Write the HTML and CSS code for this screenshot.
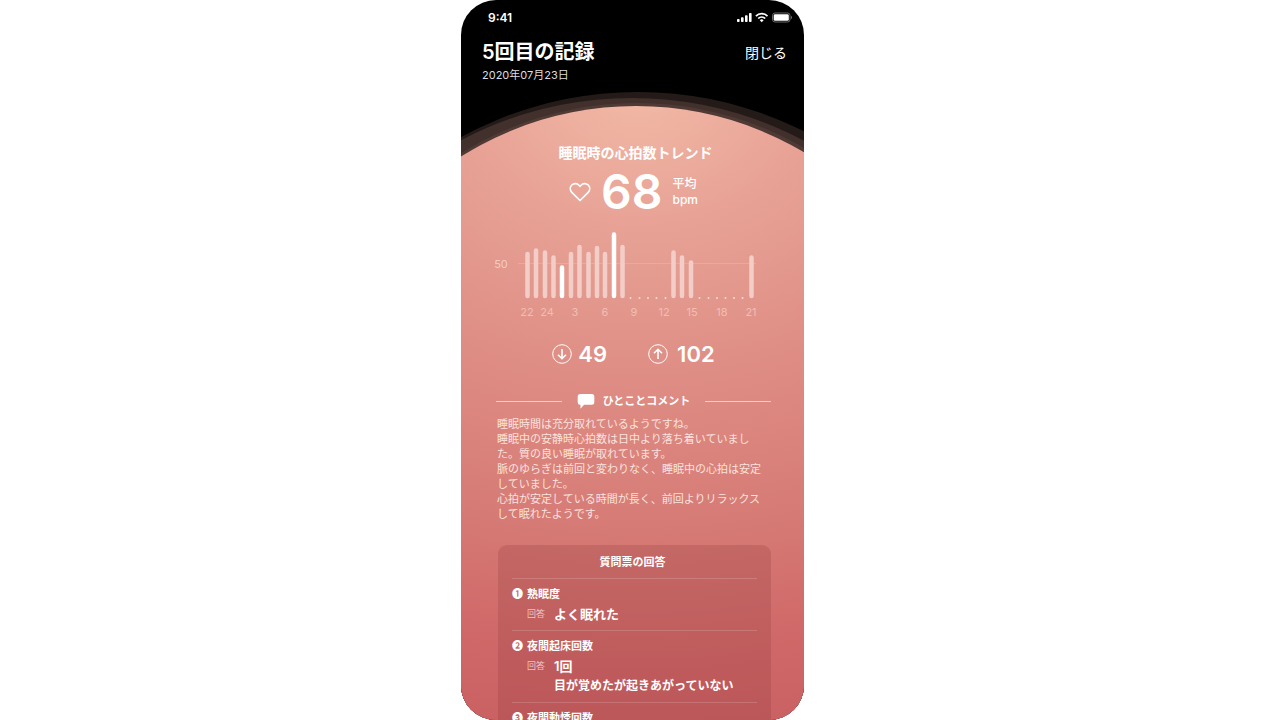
FILE: index.html
```html
<!DOCTYPE html>
<html lang="ja">
<head>
<meta charset="utf-8">
<meta name="viewport" content="width=device-width, initial-scale=1">
<title>5回目の記録</title>
<link rel="stylesheet" href="styles.css">
</head>
<body>
<main class="phone">
  <svg class="backdrop" viewBox="0 0 343 720" preserveAspectRatio="xMidYMin slice" aria-hidden="true">
    <defs>
      <radialGradient id="glow" gradientUnits="userSpaceOnUse" cx="0" cy="0" r="650" gradientTransform="translate(177 90) scale(1.3 1)">
        <stop offset="0" stop-color="#f2b9a6"/>
        <stop offset="0.2" stop-color="#e8a396"/>
        <stop offset="0.42" stop-color="#df8f86"/>
        <stop offset="0.68" stop-color="#d67a75"/>
        <stop offset="0.88" stop-color="#cf6667"/>
        <stop offset="1" stop-color="#c96062"/>
      </radialGradient>
    </defs>
    <rect width="343" height="720" fill="#000"/>
    <circle cx="177" cy="462" r="370" fill="#241b19"/>
    <circle cx="171" cy="466" r="368" fill="#42302c"/>
    <circle cx="176" cy="436" r="333" fill="#503a35"/>
    <circle cx="175" cy="434" r="328" fill="url(#glow)"/>
    <rect y="300" width="343" height="420" fill="url(#glow)"/>
  </svg>

  <header class="top">
    <div class="status">
      <span class="clock">9:41</span>
      <svg class="signals" width="55" height="12" viewBox="0 0 55 12" fill="#fff" aria-hidden="true">
        <rect x="0" y="8" width="2.600" height="3" rx=".8"/>
        <rect x="4" y="6.300" width="2.600" height="4.700" rx=".8"/>
        <rect x="8" y="4.200" width="2.600" height="6.800" rx=".8"/>
        <rect x="12" y="2" width="2.600" height="9" rx=".8"/>
        <g fill="none" stroke="#fff" stroke-width="1.700">
          <path d="M18.900 5.100a8.200 8.200 0 0 1 11.600 0"/>
          <path d="M21.200 7.500a5 5 0 0 1 7 0"/>
        </g>
        <path d="M24.700 11.200l-1.900-1.900a2.700 2.700 0 0 1 3.800 0z"/>
        <rect x="35.500" y="2" width="17.500" height="9" rx="2.500" fill="none" stroke="#777" stroke-width=".9"/>
        <rect x="36.700" y="3.200" width="15.100" height="6.600" rx="1.400"/>
        <path d="M54 5v3q1-.4 1-1.500t-1-1.500z" fill="#777"/>
      </svg>
    </div>
    <div class="heading">
      <h1 class="title">5回目の記録</h1>
      <button class="close" type="button">閉じる</button>
    </div>
    <p class="date">2020年07月23日</p>
  </header>

  <section class="trend">
    <h2 class="trend-title">睡眠時の心拍数トレンド</h2>
    <div class="average">
      <svg class="heart" width="22" height="20" viewBox="0 0 22 20" fill="none" stroke="#fff" stroke-width="1.700" stroke-linejoin="round" aria-hidden="true">
        <path d="M11 18.500 2.800 10.300C.8 8.200.8 5 2.800 3 4.900 1 8.200 1.100 10 3.200L11 4.300 12 3.200C13.800 1.100 17.100 1 19.200 3c2 2 2 5.200 0 7.300z"/>
      </svg>
      <strong class="average-value">68</strong>
      <span class="average-unit">平均<br>bpm</span>
    </div>
    <svg class="chart" viewBox="0 0 275 96" role="img" aria-label="心拍数">
      <path class="grid-line" d="M22 38.500H260"/>
      <path class="bars" d="M31.500 29V71M40 25.500V71M49 27.500V71M57.500 32.500V71M75 29V71M83.500 22V71M92.500 29V71M101 23V71M109 29V71M126.500 22V71M177.500 27.500V71M186 32.500V71M195 37.500V71M255.500 32.500V71"/>
      <path class="bars peak" d="M66 42.500V71M118 9.500V71"/>
      <path class="dots" d="M134.500 73h0M143.500 73h0M152 73h0M160.500 73h0M169.500 73h0M203.500 73h0M212.500 73h0M221 73h0M229.500 73h0M238 73h0M246.500 73h0"/>
      <g class="labels">
        <text x="5" y="43" class="level">50</text>
        <text x="31" y="91">22</text><text x="51" y="91">24</text><text x="79" y="91">3</text>
        <text x="109" y="91">6</text><text x="138" y="91">9</text><text x="168" y="91">12</text>
        <text x="196" y="91">15</text><text x="226" y="91">18</text><text x="255" y="91">21</text>
      </g>
    </svg>
    <div class="range">
      <span class="range-item">
        <svg width="20" height="20" viewBox="0 0 20 20" fill="none" stroke="#fff" aria-label="最低" role="img"><circle cx="10" cy="10" r="9.300"/><path d="M10 5v9.500M6 10.700l4 4 4-4" stroke-width="1.600"/></svg>
        <strong class="range-value">49</strong>
      </span>
      <span class="range-item range-item-high">
        <svg width="20" height="20" viewBox="0 0 20 20" fill="none" stroke="#fff" aria-label="最高" role="img"><circle cx="10" cy="10" r="9.300"/><path d="M10 15V5.500M6 9.300l4-4 4 4" stroke-width="1.600"/></svg>
        <strong class="range-value">102</strong>
      </span>
    </div>
  </section>

  <section class="comment">
    <h2 class="comment-title">
      <svg width="18" height="16" viewBox="0 0 18 16" fill="#fff" aria-hidden="true"><path d="M3.200 1h11.600a2.500 2.500 0 0 1 2.500 2.500v5.800a2.500 2.500 0 0 1-2.500 2.500H7L3.500 15.800v-4A2.500 2.500 0 0 1 .7 9.300V3.500A2.500 2.500 0 0 1 3.200 1z"/></svg>
      ひとことコメント
    </h2>
    <p class="comment-text">睡眠時間は充分取れているようですね。<br>睡眠中の安静時心拍数は日中より落ち着いていました。質の良い睡眠が取れています。<br>脈のゆらぎは前回と変わりなく、睡眠中の心拍は安定していました。<br>心拍が安定している時間が長く、前回よりリラックスして眠れたようです。</p>
  </section>

  <section class="answers">
    <h2 class="answers-title">質問票の回答</h2>
    <article class="answer">
      <h3 class="question"><span class="number">❶</span>熟眠度</h3>
      <div class="reply"><span class="reply-label">回答</span><p class="reply-main">よく眠れた</p></div>
    </article>
    <article class="answer">
      <h3 class="question"><span class="number">❷</span>夜間起床回数</h3>
      <div class="reply"><span class="reply-label">回答</span><p class="reply-main">1回</p><p class="reply-note">目が覚めたが起きあがっていない</p></div>
    </article>
    <article class="answer">
      <h3 class="question"><span class="number">❸</span>夜間動悸回数</h3>
    </article>
  </section>
</main>
</body>
</html>
```
FILE: styles.css
```css
* { box-sizing: border-box; }
body {
  margin: 0;
  padding-right: 15px;
  background: #fff;
  font-family: Inter, "Noto Sans CJK JP", sans-serif;
  color: #fff;
}
h1, h2, h3, p { margin: 0; }

.phone {
  position: relative;
  width: 100%;
  max-width: 343px;
  height: 100vh;
  margin: 0 auto;
  overflow: hidden;
  border-radius: 35px;
  isolation: isolate;
}
.backdrop {
  position: absolute;
  inset: 0;
  z-index: -1;
  width: 100%;
  height: 100%;
}

.top { padding: 7px 17px 0 21px; }
.status {
  display: flex;
  align-items: center;
  justify-content: space-between;
  height: 20px;
  margin: 0 -5px 0 6px;
}
.clock { font-size: 12px; font-weight: 600; }
.heading {
  display: flex;
  align-items: center;
  justify-content: space-between;
  height: 28px;
  margin-top: 11px;
}
.title { font-size: 20px; line-height: 28px; font-weight: 600; }
.close {
  padding: 0;
  border: 0;
  background: none;
  color: inherit;
  font: 400 14px/20px "Noto Sans CJK JP", sans-serif;
  cursor: pointer;
}
.date { margin-top: 1px; color: #ddd; font-size: 11px; line-height: 16px; font-weight: 400; }

.trend { padding: 60px 33px 0 35px; }
.trend-title { padding-left: 4px; font-size: 14px; line-height: 20px; font-weight: 600; text-align: center; }
.average {
  display: flex;
  align-items: center;
  justify-content: center;
  gap: 10px;
  height: 50px;
  margin-top: 4px;
}
.average-value { font-size: 48px; line-height: 50px; font-weight: 600; }
.average-unit { font-size: 12px; line-height: 16px; font-weight: 500; }
.chart { display: block; width: 100%; margin-top: 8px; overflow: visible; }
.grid-line { stroke: #fff; stroke-opacity: .15; }
.bars { fill: none; stroke: #f3cec8; stroke-width: 4.5; stroke-linecap: round; }
.peak { stroke: #fff; }
.dots { stroke: #f8ddd6; stroke-width: 2; stroke-linecap: round; }
.labels { fill: #f1beb4; font-size: 11px; font-weight: 400; text-anchor: middle; }
.level { fill: #f4cbc3; }
.range {
  display: flex;
  align-items: center;
  justify-content: center;
  gap: 41px;
  height: 24px;
  margin-top: 21px;
}
.range-item { display: flex; align-items: center; gap: 6px; }
.range-item-high { gap: 9px; }
.range-value { font-size: 22px; line-height: 24px; font-weight: 600; }

.comment { padding: 25px 33px 0 35px; }
.comment-title {
  display: flex;
  align-items: center;
  gap: 8px;
  font-size: 11px;
  line-height: 20px;
  font-weight: 700;
}
.comment-title::before,
.comment-title::after {
  content: "";
  flex: 1;
  height: 1px;
  background: #f3cfc9;
}
.comment-title::before { margin-right: 7px; }
.comment-title::after { margin-left: 7px; }
.comment-text {
  margin-top: 6px;
  padding-left: 1px;
  color: #fae2de;
  font-size: 11px;
  line-height: 15px;
  font-weight: 400;
}

.answers {
  margin: 23px 33px 0 37px;
  padding: 7px 14px 20px;
  border-radius: 9px;
  background: rgba(145, 60, 60, .26);
}
.answers-title {
  padding: 0 4px 6px 0;
  font-size: 11px;
  line-height: 20px;
  font-weight: 600;
  text-align: center;
}
.answer { padding: 5px 0 6px; border-top: 1px solid rgba(255, 255, 255, .16); }
.question {
  display: flex;
  gap: 4px;
  font-size: 11px;
  line-height: 20px;
  font-weight: 600;
}
.number { width: 11px; }
.reply {
  display: grid;
  grid-template-columns: 27px 1fr;
  align-items: center;
  padding-left: 15px;
}
.reply-label { color: #ecc5c3; font-size: 9px; line-height: 20px; font-weight: 400; }
.reply-main { font-size: 13px; line-height: 20px; font-weight: 600; }
.reply-note { grid-column: 2; font-size: 12px; line-height: 20px; font-weight: 600; }
```
